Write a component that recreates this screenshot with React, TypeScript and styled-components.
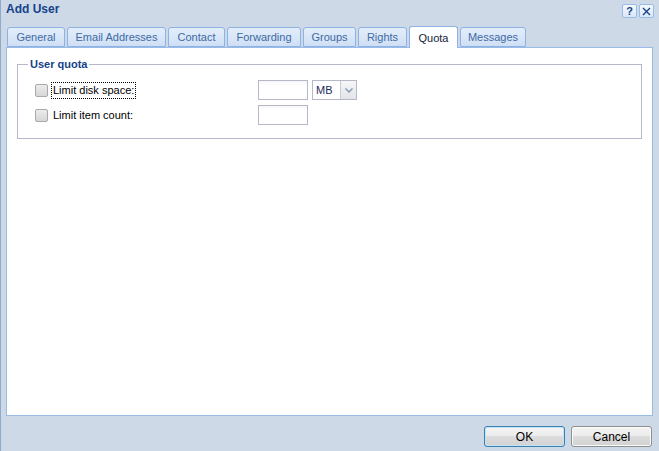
import React from 'react';
import styled, { createGlobalStyle } from 'styled-components';

const GlobalStyle = createGlobalStyle`
  html, body {
    margin: 0;
    padding: 0;
  }
  body {
    font-family: "Liberation Sans", Arial, sans-serif;
    font-size: 11px;
    background: #cdd9e7;
  }
`;

const Window = styled.div`
  width: 659px;
  height: 451px;
  box-sizing: border-box;
  display: flex;
  flex-direction: column;
  background: #cdd9e7;
  border-left: 1px solid #8eaad0;
`;

const Header = styled.div`
  height: 26px;
  box-sizing: border-box;
  display: flex;
  align-items: flex-start;
  justify-content: space-between;
  padding: 2px 5px 0 5px;
`;

const Title = styled.div`
  font-size: 12px;
  font-weight: bold;
  line-height: 14px;
  color: #15428b;
`;

const Tools = styled.div`
  display: flex;
  gap: 2px;
  margin-top: 2px;
`;

const ToolButton = styled.div`
  width: 15px;
  height: 14px;
  box-sizing: border-box;
  border: 1px solid #99bbe8;
  border-radius: 2px;
  background: linear-gradient(#f4f8fd, #dbe7f6);
  display: flex;
  align-items: center;
  justify-content: center;
  color: #15428b;
  font-weight: bold;
  font-size: 11px;
  line-height: 12px;
`;

const TabStrip = styled.div`
  display: flex;
  align-items: flex-end;
  gap: 2px;
  padding-left: 6px;
  height: 21px;
  position: relative;
  z-index: 1;
`;

const Tab = styled.div<{ $w: number; $active?: boolean }>`
  width: ${(p) => p.$w}px;
  height: ${(p) => (p.$active ? 22 : 20)}px;
  margin-bottom: ${(p) => (p.$active ? -1 : 0)}px;
  box-sizing: border-box;
  border: 1px solid #8db2e3;
  border-bottom: ${(p) => (p.$active ? 'none' : '1px solid #8db2e3')};
  border-radius: 3px 3px 0 0;
  background: ${(p) => (p.$active ? '#ffffff' : 'linear-gradient(#e3eefb, #cfdff4)')};
  color: ${(p) => (p.$active ? '#15223b' : '#416aa3')};
  display: flex;
  align-items: center;
  justify-content: center;
  padding-top: ${(p) => (p.$active ? 1 : 0)}px;
  white-space: nowrap;
`;

const Panel = styled.div`
  flex: 1;
  margin: 0 6px 0 5px;
  border: 1px solid #99bbe8;
  background: #ffffff;
  padding: 8px 10px 0 10px;
`;

const QuotaSet = styled.fieldset`
  margin: 0;
  border: 1px solid #b5b8c8;
  padding: 0 0 13px 10px;
  display: flex;
  flex-direction: column;
  gap: 5px;
`;

const Legend = styled.legend`
  font-weight: bold;
  font-size: 11px;
  line-height: 16px;
  color: #15428b;
  padding: 0 2px;
  margin-bottom: 8px;
`;

const Row = styled.div`
  display: flex;
  align-items: center;
  height: 20px;
`;

const LabelCell = styled.div`
  width: 230px;
  display: flex;
  align-items: center;
  padding-left: 7px;
  box-sizing: border-box;
`;

const Check = styled.span`
  width: 13px;
  height: 13px;
  box-sizing: border-box;
  border: 1px solid #a9a9a9;
  border-radius: 2px;
  background: linear-gradient(#ececec, #d6d6d6);
  margin-right: 4px;
  flex-shrink: 0;
`;

const Label = styled.span<{ $focused?: boolean }>`
  color: #000;
  line-height: 15px;
  padding: 0 1px;
  outline: ${(p) => (p.$focused ? '1px dotted #000' : 'none')};
`;

const TextBox = styled.div`
  width: 50px;
  height: 20px;
  box-sizing: border-box;
  border: 1px solid #b5b8c8;
  background: linear-gradient(#f6f6f6, #ffffff 4px);
`;

const Combo = styled.div`
  width: 45px;
  height: 20px;
  margin-left: 4px;
  box-sizing: border-box;
  border: 1px solid #b5b8c8;
  display: flex;
  background: #fff;
`;

const ComboText = styled.div`
  flex: 1;
  padding-left: 3px;
  line-height: 18px;
  color: #1d2a5c;
`;

const ComboArrow = styled.div`
  width: 15px;
  border-left: 1px solid #c8ccd8;
  background: linear-gradient(#f7f7f7, #e2e4ea);
  display: flex;
  align-items: center;
  justify-content: center;
`;

const Footer = styled.div`
  height: 35px;
  box-sizing: border-box;
  display: flex;
  justify-content: flex-end;
  align-items: flex-start;
  gap: 6px;
  padding: 10px 7px 0 0;
`;

const Button = styled.div<{ $default?: boolean }>`
  width: 81px;
  height: 21px;
  box-sizing: border-box;
  border: 1px solid ${(p) => (p.$default ? '#3c7fb1' : '#8e8f8f')};
  border-radius: 3px;
  background: linear-gradient(#f4f4f4 0%, #ececec 45%, #dcdcdc 50%, #d2d2d2 100%);
  box-shadow: inset 0 0 0 1px ${(p) => (p.$default ? '#bfe5f8' : '#fbfbfb')};
  display: flex;
  align-items: center;
  justify-content: center;
  color: #000;
  font-size: 12px;
`;

const tabs = [
  { name: 'General', w: 58 },
  { name: 'Email Addresses', w: 99 },
  { name: 'Contact', w: 57 },
  { name: 'Forwarding', w: 74 },
  { name: 'Groups', w: 53 },
  { name: 'Rights', w: 49 },
  { name: 'Quota', w: 49, active: true },
  { name: 'Messages', w: 66 },
];

export default function App() {
  return (
    <>
      <GlobalStyle />
      <Window>
        <Header>
          <Title>Add User</Title>
          <Tools>
            <ToolButton>?</ToolButton>
            <ToolButton>
              <svg width="9" height="9" viewBox="0 0 9 9">
                <path d="M1 1 L8 8 M8 1 L1 8" stroke="#15428b" strokeWidth="1.4" />
              </svg>
            </ToolButton>
          </Tools>
        </Header>
        <TabStrip>
          {tabs.map((t) => (
            <Tab key={t.name} $w={t.w} $active={t.active}>
              {t.name}
            </Tab>
          ))}
        </TabStrip>
        <Panel>
          <QuotaSet>
            <Legend>User quota</Legend>
            <Row>
              <LabelCell>
                <Check />
                <Label $focused>Limit disk space:</Label>
              </LabelCell>
              <TextBox />
              <Combo>
                <ComboText>MB</ComboText>
                <ComboArrow>
                  <svg width="8" height="5" viewBox="0 0 8 5">
                    <path d="M0.5 0.5 L4 4 L7.5 0.5" stroke="#8a9ab5" strokeWidth="1.5" fill="none" />
                  </svg>
                </ComboArrow>
              </Combo>
            </Row>
            <Row>
              <LabelCell>
                <Check />
                <Label>Limit item count:</Label>
              </LabelCell>
              <TextBox />
            </Row>
          </QuotaSet>
        </Panel>
        <Footer>
          <Button $default>OK</Button>
          <Button>Cancel</Button>
        </Footer>
      </Window>
    </>
  );
}
